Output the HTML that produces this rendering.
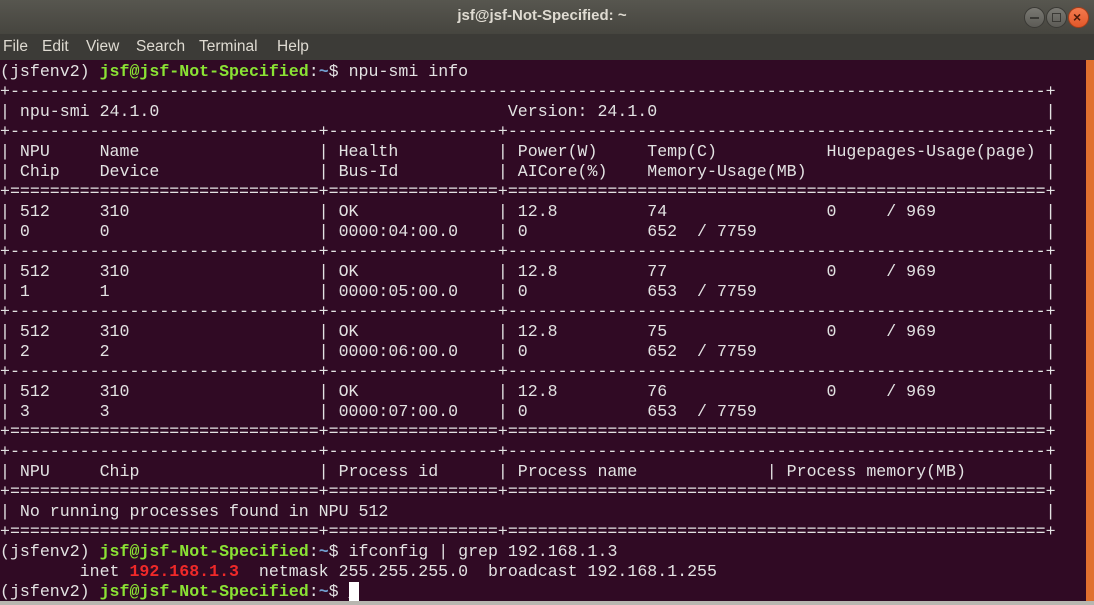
<!DOCTYPE html>
<html><head><meta charset="utf-8"><style>
html,body{margin:0;padding:0;width:1094px;height:605px;overflow:hidden;background:#300a24}
#title{position:absolute;left:0;top:0;width:1094px;height:34px;background:linear-gradient(#57564f,#46453f);}
#title .t{position:absolute;left:0;width:1084px;text-align:center;top:7px;color:#dfdbd2;font:bold 15px "Liberation Sans",sans-serif}
.btn{position:absolute;top:7px;width:19px;height:19px;border-radius:50%;background:linear-gradient(#7a7973,#5c5b56);border:1px solid #3a3935}
#menu{position:absolute;left:0;top:34px;width:1094px;height:26px;background:#3c3b37;color:#dfdbd2;font:15.5px "Liberation Sans",sans-serif}
#menu span{position:absolute;top:4px}
#term{position:absolute;left:0;top:62px;width:1086px;height:539px;background:#300a24}
pre{margin:0;font:16.6px/20px "Liberation Mono",monospace;color:#e2e2e2;white-space:pre}
.g{color:#8ae234;font-weight:bold}.b{color:#729fcf;font-weight:bold}.r{color:#ef2929;font-weight:bold}
#sb{position:absolute;left:1086px;top:60px;width:8px;height:541px;background:#e0702f}
#bot{position:absolute;left:0;top:601px;width:1094px;height:4px;background:#b8b6b0}
.cur{background:#fff;color:#fff}
</style></head><body>
<div style="position:absolute;left:0;top:60px;width:1086px;height:2px;background:#300a24"></div>
<div id="title"><div class="t">jsf@jsf-Not-Specified: ~</div>
<div class="btn" style="left:1024px"><div style="position:absolute;left:5px;top:9px;width:9px;height:2px;background:#3a3935"></div></div>
<div class="btn" style="left:1046px"><div style="position:absolute;left:5px;top:5px;width:7px;height:7px;border:1px solid #3a3935"></div></div>
<div class="btn" style="left:1068px;background:linear-gradient(#f27a4e,#e2582a);border-color:#a33d1a"><div style="position:absolute;left:4px;top:0;color:#4a1a0a;font:bold 14px 'Liberation Sans',sans-serif;line-height:19px">×</div></div>
</div>
<div id="menu"><span style="left:3px">File</span><span style="left:42px">Edit</span><span style="left:86px">View</span><span style="left:136px">Search</span><span style="left:199px">Terminal</span><span style="left:277px">Help</span></div>
<div id="term"><pre id="p"></pre></div>
<div id="sb"></div><div id="bot"></div>
<script>
function row(parts){var a=new Array(106).fill(' ');for(var i=0;i<parts.length;i+=2){var c=parts[i],s=parts[i+1];for(var j=0;j<s.length;j++)a[c+j]=s[j];}return a.join('');}
function div(ch,pl){var a=new Array(106).fill(ch);a[0]='+';a[105]='+';(pl||[]).forEach(function(p){a[p]='+'});return a.join('');}
var P='(jsfenv2) <span class="g">jsf@jsf-Not-Specified</span>:<span class="b">~</span>$ ';
var L=[];
L.push(P+'npu-smi info');
L.push(div('-'));
L.push(row([0,'|',2,'npu-smi 24.1.0',51,'Version: 24.1.0',105,'|']));
L.push(div('-',[32,50]));
L.push(row([0,'|',2,'NPU',10,'Name',32,'|',34,'Health',50,'|',52,'Power(W)',65,'Temp(C)',83,'Hugepages-Usage(page)',105,'|']));
L.push(row([0,'|',2,'Chip',10,'Device',32,'|',34,'Bus-Id',50,'|',52,'AICore(%)',65,'Memory-Usage(MB)',105,'|']));
L.push(div('=',[32,50]));
var t=['74','77','75','76'],m=['652','653','652','653'];
for(var i=0;i<4;i++){
L.push(row([0,'|',2,'512',10,'310',32,'|',34,'OK',50,'|',52,'12.8',65,t[i],83,'0',89,'/ 969',105,'|']));
L.push(row([0,'|',2,''+i,10,''+i,32,'|',34,'0000:0'+(4+i)+':00.0',50,'|',52,'0',65,m[i],70,'/ 7759',105,'|']));
L.push(div(i<3?'-':'=',[32,50]));
}
L.push(div('-',[32,50]));
L.push(row([0,'|',2,'NPU',10,'Chip',32,'|',34,'Process id',50,'|',52,'Process name',77,'|',79,'Process memory(MB)',105,'|']));
L.push(div('=',[32,50]));
L.push(row([0,'|',2,'No running processes found in NPU 512',105,'|']));
L.push(div('=',[32,50]));
L.push(P+'ifconfig | grep 192.168.1.3');
L.push('        inet <span class="r">192.168.1.3</span>  netmask 255.255.255.0  broadcast 192.168.1.255');
L.push(P+'<span class="cur">_</span>');
document.getElementById('p').innerHTML=L.join('\n');
</script>
</body></html>
